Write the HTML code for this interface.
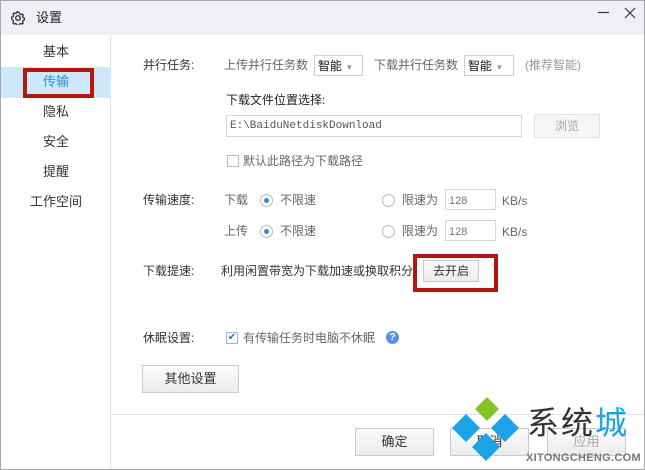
<!DOCTYPE html>
<html><head><meta charset="utf-8"><style>
*{margin:0;padding:0;box-sizing:border-box}
body{width:645px;height:470px;overflow:hidden;background:#fff;font-family:"Liberation Sans","Noto Sans CJK SC",sans-serif;font-size:12px;color:#333;position:relative}
.a{position:absolute;white-space:nowrap;line-height:14px}
.win{position:absolute;left:0;top:0;width:645px;height:470px;border:1px solid #a8a8a8}
.title{position:absolute;left:1px;top:1px;width:643px;height:34px;background:#eef0f5}
.side{position:absolute;left:1px;top:35px;width:110px;height:434px;border-right:1px solid #e3e3e3}
.sel{position:absolute;left:1px;top:67px;width:110px;height:31px;background:#cde8fa}
.red{position:absolute;border:4px solid #b3150f}
.nav{position:absolute;width:110px;left:1px;text-align:center;font-size:13px;color:#333;line-height:16px}
.sel2{position:absolute;border:1px solid #cfcfcf;background:#fff;height:21px}
.btn{position:absolute;border:1px solid #c9c9c9;background:linear-gradient(#fafafa,#ececec);text-align:center;font-size:12px;color:#333}
.inp{position:absolute;border:1px solid #d6d6d6;background:#fff}
.radio{position:absolute;width:13px;height:13px;border:1px solid #b9b9b9;border-radius:50%;background:#fff}
.radio.on::after{content:"";position:absolute;left:3px;top:3px;width:5px;height:5px;border-radius:50%;background:#2a8ee8}
.lbl{color:#666}
</style></head><body>
<div class="win"></div>
<div class="title"></div>
<svg class="a" style="left:11px;top:11px" width="14" height="14" viewBox="0 0 14 14"><circle cx="7" cy="7" r="2.3" fill="none" stroke="#333" stroke-width="1.4"/><path d="M7 1.2l1.3.3.3 1.4 1.3.7 1.3-.6 1 1-.6 1.4.6 1.3 1.4.4v1.8l-1.4.4-.6 1.3.6 1.4-1 1-1.3-.6-1.3.7-.3 1.4H6.1l-.4-1.4-1.3-.6-1.3.6-1.2-1.2.6-1.3-.6-1.3L.6 7.9V6.1l1.4-.4.6-1.3-.6-1.4 1.2-1.1 1.3.6 1.3-.7.3-1.4z" fill="none" stroke="#333" stroke-width="1.3" stroke-linejoin="round"/></svg>
<div class="a" style="left:36px;top:11px;font-size:13px;color:#222">设置</div>
<svg class="a" style="left:590px;top:5px" width="50" height="16" viewBox="0 0 50 16"><path d="M8 7.5h11" stroke="#333" stroke-width="1.2"/><path d="M35 3l10 10M45 3L35 13" stroke="#333" stroke-width="1.2"/></svg>
<div class="side"></div>
<div class="sel"></div>
<div class="nav" style="top:44px">基本</div>
<div class="nav" style="top:74px;color:#2b8fe0">传输</div>
<div class="nav" style="top:104px">隐私</div>
<div class="nav" style="top:134px">安全</div>
<div class="nav" style="top:164px">提醒</div>
<div class="nav" style="top:194px">工作空间</div>
<div class="red" style="left:23px;top:68px;width:71px;height:30px"></div>

<div class="a" style="left:143px;top:58px">并行任务:</div>
<div class="a lbl" style="left:224px;top:58px">上传并行任务数</div>
<div class="sel2" style="left:314px;top:55px;width:49px"></div>
<div class="a" style="left:318px;top:59px;color:#111">智能 <span style="color:#999;font-size:8px">▼</span></div>
<div class="a lbl" style="left:374px;top:58px">下载并行任务数</div>
<div class="sel2" style="left:464px;top:55px;width:50px"></div>
<div class="a" style="left:468px;top:59px;color:#111">智能 <span style="color:#999;font-size:8px">▼</span></div>
<div class="a" style="left:525px;top:58px;color:#999">(推荐智能)</div>

<div class="a" style="left:226px;top:93px;color:#222">下载文件位置选择:</div>
<div class="inp" style="left:226px;top:115px;width:296px;height:22px"></div>
<div class="a" style="left:230px;top:119px;font-family:'Liberation Mono',monospace;font-size:11px;color:#555">E:\BaiduNetdiskDownload</div>
<div class="btn" style="left:534px;top:114px;width:66px;height:24px;line-height:22px;color:#aaa;background:#f5f5f5;border-color:#e0e0e0">浏览</div>
<div class="a" style="left:227px;top:155px;width:12px;height:12px;border:1px solid #bbb"></div>
<div class="a lbl" style="left:243px;top:154px">默认此路径为下载路径</div>

<div class="a" style="left:143px;top:193px">传输速度:</div>
<div class="a lbl" style="left:224px;top:193px">下载</div>
<div class="radio on" style="left:260px;top:194px"></div>
<div class="a lbl" style="left:280px;top:193px">不限速</div>
<div class="radio" style="left:382px;top:194px"></div>
<div class="a lbl" style="left:402px;top:193px">限速为</div>
<div class="inp" style="left:445px;top:189px;width:51px;height:21px"></div>
<div class="a" style="left:449px;top:194px;color:#777;font-size:11px">128</div>
<div class="a lbl" style="left:502px;top:194px">KB/s</div>

<div class="a lbl" style="left:224px;top:224px">上传</div>
<div class="radio on" style="left:260px;top:225px"></div>
<div class="a lbl" style="left:280px;top:224px">不限速</div>
<div class="radio" style="left:382px;top:225px"></div>
<div class="a lbl" style="left:402px;top:224px">限速为</div>
<div class="inp" style="left:445px;top:220px;width:51px;height:21px"></div>
<div class="a" style="left:449px;top:225px;color:#777;font-size:11px">128</div>
<div class="a lbl" style="left:502px;top:225px">KB/s</div>

<div class="a" style="left:143px;top:264px">下载提速:</div>
<div class="a" style="left:221px;top:264px">利用闲置带宽为下载加速或换取积分</div>
<div class="btn" style="left:423px;top:260px;width:56px;height:22px;line-height:20px">去开启</div>
<div class="red" style="left:413px;top:254px;width:85px;height:38px"></div>

<div class="a" style="left:143px;top:331px">休眠设置:</div>
<div class="a" style="left:226px;top:332px;width:12px;height:12px;border:1px solid #9bb6d8;font-size:10px;line-height:10px;color:#2a6fc9;text-align:center">✔</div>
<div class="a lbl" style="left:243px;top:331px">有传输任务时电脑不休眠</div>
<div class="a" style="left:386px;top:331px;width:13px;height:13px;border-radius:50%;background:#5c8fe8;color:#fff;font-size:10px;line-height:13px;text-align:center;font-weight:bold">?</div>
<div class="btn" style="left:142px;top:365px;width:97px;height:28px;line-height:26px;font-size:13px">其他设置</div>

<div class="a" style="left:112px;top:414px;width:532px;height:1px;background:#e3e3e3"></div>
<div class="btn" style="left:355px;top:428px;width:79px;height:28px;line-height:26px;font-size:13px">确定</div>
<div class="btn" style="left:450px;top:428px;width:79px;height:28px;line-height:26px;font-size:13px">取消</div>
<div class="btn" style="left:547px;top:428px;width:79px;height:28px;line-height:26px;font-size:13px;color:#aaa">应用</div>

<svg class="a" style="left:452px;top:396px" width="70" height="70" viewBox="0 0 70 70">
<path d="M35 1l12 12-12 12-12-12z" fill="#84c225"/>
<path d="M14 18l14 14-14 14L0 32z" fill="#1ba3e8"/>
<path d="M53 18l14 14-14 14-14-14z" fill="#1ba3e8"/>
<path d="M34 37l14 14-14 14-14-14z" fill="#1ba3e8"/>
</svg>
<div class="a" style="left:527px;top:402px;font-size:32px;line-height:38px;color:#333;font-family:'Noto Sans CJK SC',sans-serif;letter-spacing:2px">系统<span style="color:#1ba3e8">城</span></div>
<div class="a" style="left:526px;top:451px;font-size:11px;letter-spacing:0.3px;color:#777;font-weight:bold">XITONGCHENG.COM</div>
</body></html>
